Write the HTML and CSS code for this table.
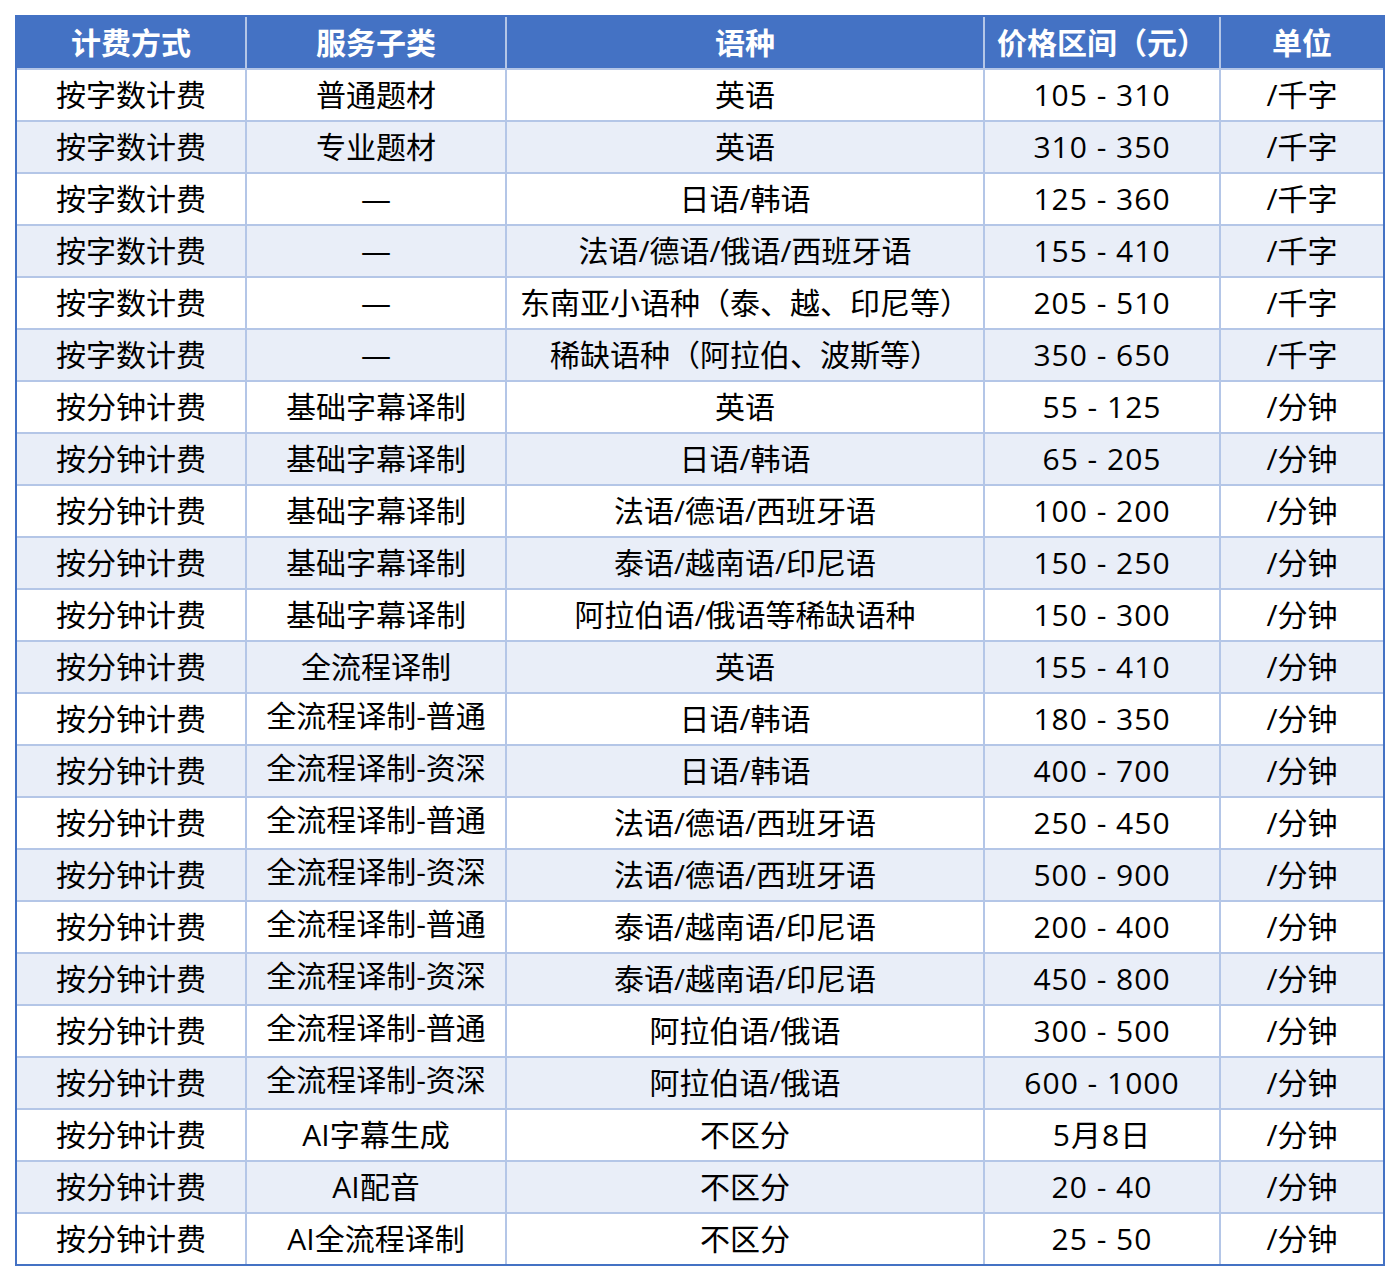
FILE: index.html
```html
<!DOCTYPE html>
<html lang="zh">
<head>
<meta charset="utf-8">
<title>价格表</title>
<link rel="stylesheet" href="styles.css">
</head>
<body>
<div class="wrap">
<table class="price">
<colgroup>
<col class="c1"><col class="c2"><col class="c3"><col class="c4"><col class="c5">
</colgroup>
<thead>
<tr><th>计费方式</th><th>服务子类</th><th>语种</th><th>价格区间（元）</th><th>单位</th></tr>
</thead>
<tbody>
<tr><td>按字数计费</td><td>普通题材</td><td>英语</td><td>105 - 310</td><td>/千字</td></tr>
<tr><td>按字数计费</td><td>专业题材</td><td>英语</td><td>310 - 350</td><td>/千字</td></tr>
<tr><td>按字数计费</td><td>—</td><td>日语/韩语</td><td>125 - 360</td><td>/千字</td></tr>
<tr><td>按字数计费</td><td>—</td><td>法语/德语/俄语/西班牙语</td><td>155 - 410</td><td>/千字</td></tr>
<tr><td>按字数计费</td><td>—</td><td>东南亚小语种（泰、越、印尼等）</td><td>205 - 510</td><td>/千字</td></tr>
<tr><td>按字数计费</td><td>—</td><td>稀缺语种（阿拉伯、波斯等）</td><td>350 - 650</td><td>/千字</td></tr>
<tr><td>按分钟计费</td><td>基础字幕译制</td><td>英语</td><td>55 - 125</td><td>/分钟</td></tr>
<tr><td>按分钟计费</td><td>基础字幕译制</td><td>日语/韩语</td><td>65 - 205</td><td>/分钟</td></tr>
<tr><td>按分钟计费</td><td>基础字幕译制</td><td>法语/德语/西班牙语</td><td>100 - 200</td><td>/分钟</td></tr>
<tr><td>按分钟计费</td><td>基础字幕译制</td><td>泰语/越南语/印尼语</td><td>150 - 250</td><td>/分钟</td></tr>
<tr><td>按分钟计费</td><td>基础字幕译制</td><td>阿拉伯语/俄语等稀缺语种</td><td>150 - 300</td><td>/分钟</td></tr>
<tr><td>按分钟计费</td><td>全流程译制</td><td>英语</td><td>155 - 410</td><td>/分钟</td></tr>
<tr><td>按分钟计费</td><td><span class="up">全流程译制-普通</span></td><td>日语/韩语</td><td>180 - 350</td><td>/分钟</td></tr>
<tr><td>按分钟计费</td><td><span class="up">全流程译制-资深</span></td><td>日语/韩语</td><td>400 - 700</td><td>/分钟</td></tr>
<tr><td>按分钟计费</td><td><span class="up">全流程译制-普通</span></td><td>法语/德语/西班牙语</td><td>250 - 450</td><td>/分钟</td></tr>
<tr><td>按分钟计费</td><td><span class="up">全流程译制-资深</span></td><td>法语/德语/西班牙语</td><td>500 - 900</td><td>/分钟</td></tr>
<tr><td>按分钟计费</td><td><span class="up">全流程译制-普通</span></td><td>泰语/越南语/印尼语</td><td>200 - 400</td><td>/分钟</td></tr>
<tr><td>按分钟计费</td><td><span class="up">全流程译制-资深</span></td><td>泰语/越南语/印尼语</td><td>450 - 800</td><td>/分钟</td></tr>
<tr><td>按分钟计费</td><td><span class="up">全流程译制-普通</span></td><td>阿拉伯语/俄语</td><td>300 - 500</td><td>/分钟</td></tr>
<tr><td>按分钟计费</td><td><span class="up">全流程译制-资深</span></td><td>阿拉伯语/俄语</td><td>600 - 1000</td><td>/分钟</td></tr>
<tr><td>按分钟计费</td><td>AI字幕生成</td><td>不区分</td><td>5月8日</td><td>/分钟</td></tr>
<tr><td>按分钟计费</td><td>AI配音</td><td>不区分</td><td>20 - 40</td><td>/分钟</td></tr>
<tr><td>按分钟计费</td><td>AI全流程译制</td><td>不区分</td><td>25 - 50</td><td>/分钟</td></tr>
</tbody>
</table>
</div>
</body>
</html>
```

FILE: styles.css
```css
html, body {
  margin: 0;
  padding: 0;
  background: #ffffff;
}
body {
  padding: 15px;
  font-family: "Open Sans", "Noto Sans CJK SC", sans-serif;
}
.wrap {
  width: 1366px;
  border: 2px solid #4472c4;
}
.price {
  width: 1366px;
  border-collapse: collapse;
  table-layout: fixed;
}
.c1 { width: 229px; }
.c2 { width: 260px; }
.c3 { width: 478px; }
.c4 { width: 236px; }
.c5 { width: 163px; }
.price th,
.price td {
  border: 2px solid #b4c6e7;
  padding: 0;
  text-align: center;
  vertical-align: middle;
  white-space: nowrap;
  font-size: 30px;
  line-height: 1;
}
.price th {
  background: #4472c4;
  color: #ffffff;
  font-weight: 700;
  height: 51px;
  border-top: none;
}
.price td {
  color: #000000;
  height: 50px;
}
.price td:nth-child(4) {
  letter-spacing: 1px;
}
.price tr > :first-child { border-left: none; }
.price tr > :last-child { border-right: none; }
.price tbody tr:last-child td { border-bottom: none; }
.price tbody tr:nth-child(even) td { background: #e9eef8; }
.up {
  display: inline-block;
  padding-bottom: 6px;
}
```
